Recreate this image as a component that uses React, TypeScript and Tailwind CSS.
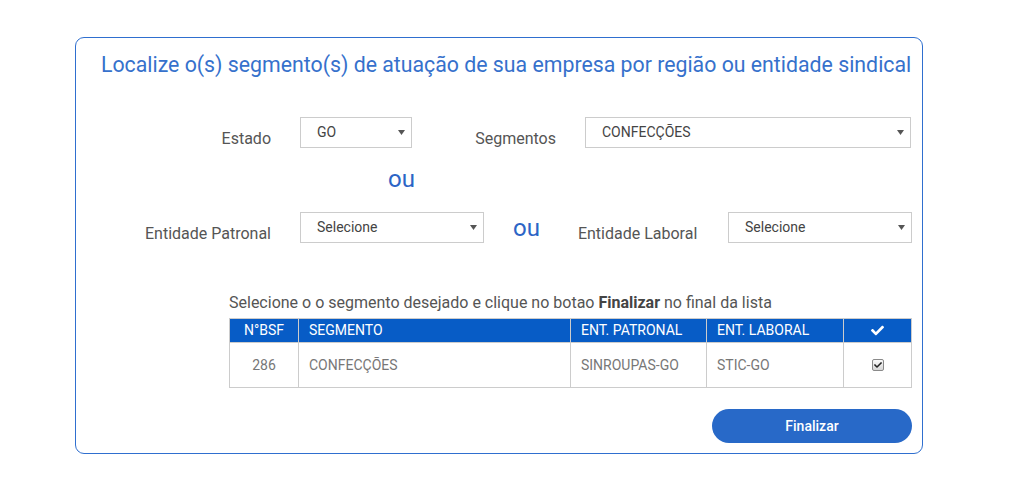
import React from 'react';

const Arrow = () => (
  <svg width="7" height="5" viewBox="0 0 7 5" className="shrink-0">
    <path d="M0 0h7L3.5 5z" fill="#555" />
  </svg>
);

const FakeSelect = ({ value, width }: { value: string; width: string }) => (
  <div
    className={`${width} h-[31px] border border-[#cccccc] bg-white flex items-center justify-between pl-[16px] pr-[6px] text-[14px] text-[#444]`}
  >
    <span className="-mt-[1px]">{value}</span>
    <Arrow />
  </div>
);

const CheckIcon = ({ className }: { className?: string }) => (
  <svg viewBox="0 0 512 512" className={className}>
    <path
      fill="currentColor"
      d="M173.9 439.4 7.5 273c-10-10-10-26.2 0-36.2l36.2-36.2c10-10 26.2-10 36.2 0L192 312.7 432.1 72.6c10-10 26.2-10 36.2 0l36.2 36.2c10 10 10 26.2 0 36.2L210.1 439.4c-10 10-26.2 10-36.2 0z"
    />
  </svg>
);

const App = () => {
  return (
    <div className="w-[1012px] h-[482px] bg-white pt-[37px] font-['Roboto',sans-serif]">
      <div className="ml-[75px] w-[848px] h-[417px] border border-[#2f6fcf] rounded-[9px]">
        <h1 className="pl-[25px] pt-[12px] text-[21.3px] leading-[30px] whitespace-nowrap text-[#3671cc]">
          Localize o(s) segmento(s) de atuação de sua empresa por região ou entidade sindical
        </h1>

        <div className="flex items-start mt-[37px] h-[34px]">
          <div className="w-[195px] text-right mt-[10px] text-[16px] leading-6 text-[#555]">Estado</div>
          <div className="ml-[29px]">
            <FakeSelect value="GO" width="w-[112px]" />
          </div>
          <div className="w-[144px] text-right mt-[10px] text-[16px] leading-6 text-[#555]">Segmentos</div>
          <div className="ml-[29px]">
            <FakeSelect value="CONFECÇÕES" width="w-[326px]" />
          </div>
        </div>

        <div className="mt-[14px] ml-[312px] text-[24px] leading-[28px] text-[#2c65c6]">ou</div>

        <div className="flex items-start mt-[19px] h-[34px]">
          <div className="w-[195px] text-right mt-[10px] text-[16px] leading-6 text-[#555]">
            Entidade Patronal
          </div>
          <div className="ml-[29px]">
            <FakeSelect value="Selecione" width="w-[184px]" />
          </div>
          <div className="ml-[29px] mt-[2px] text-[24px] leading-[28px] text-[#2c65c6]">ou</div>
          <div className="ml-[38px] mt-[10px] text-[16px] leading-6 text-[#555]">Entidade Laboral</div>
          <div className="ml-auto mr-[10px]">
            <FakeSelect value="Selecione" width="w-[184px]" />
          </div>
        </div>

        <div className="ml-[153px] w-[682px] mt-[47px]">
          <p className="text-[16px] leading-[20px] whitespace-nowrap text-[#555]">
            Selecione o o segmento desejado e clique no botao <b className="font-bold text-[#444]">Finalizar</b> no
            final da lista
          </p>
          <table className="mt-[5px] w-[682px] table-fixed border-collapse text-[14px]">
            <colgroup>
              <col className="w-[69px]" />
              <col className="w-[272px]" />
              <col className="w-[136px]" />
              <col className="w-[137px]" />
              <col className="w-[68px]" />
            </colgroup>
            <thead>
              <tr className="h-[24px] bg-[#075cc6] text-white">
                <th className="border border-[#cccccc] font-normal text-center">N°BSF</th>
                <th className="border border-[#cccccc] font-normal text-left pl-[10px]">SEGMENTO</th>
                <th className="border border-[#cccccc] font-normal text-left pl-[10px]">ENT. PATRONAL</th>
                <th className="border border-[#cccccc] font-normal text-left pl-[10px]">ENT. LABORAL</th>
                <th className="border border-[#cccccc] font-normal">
                  <CheckIcon className="w-[13px] h-[13px] mx-auto" />
                </th>
              </tr>
            </thead>
            <tbody>
              <tr className="h-[45px] text-[#777]">
                <td className="border border-[#cccccc] text-center">286</td>
                <td className="border border-[#cccccc] pl-[10px]">CONFECÇÕES</td>
                <td className="border border-[#cccccc] pl-[10px]">SINROUPAS-GO</td>
                <td className="border border-[#cccccc] pl-[10px]">STIC-GO</td>
                <td className="border border-[#cccccc]">
                  <div className="mx-auto w-[12px] h-[12px] rounded-[2px] border border-[#8a8a8a] bg-gradient-to-b from-[#fafafa] to-[#d6d6d6] flex items-center justify-center text-[#222]">
                    <CheckIcon className="w-[8px] h-[8px]" />
                  </div>
                </td>
              </tr>
            </tbody>
          </table>
        </div>

        <div className="flex justify-end mr-[10px] mt-[21px]">
          <button className="w-[200px] h-[34px] rounded-full bg-[#2869c8] text-white text-[14px] font-medium">
            Finalizar
          </button>
        </div>
      </div>
    </div>
  );
};

export default App;
